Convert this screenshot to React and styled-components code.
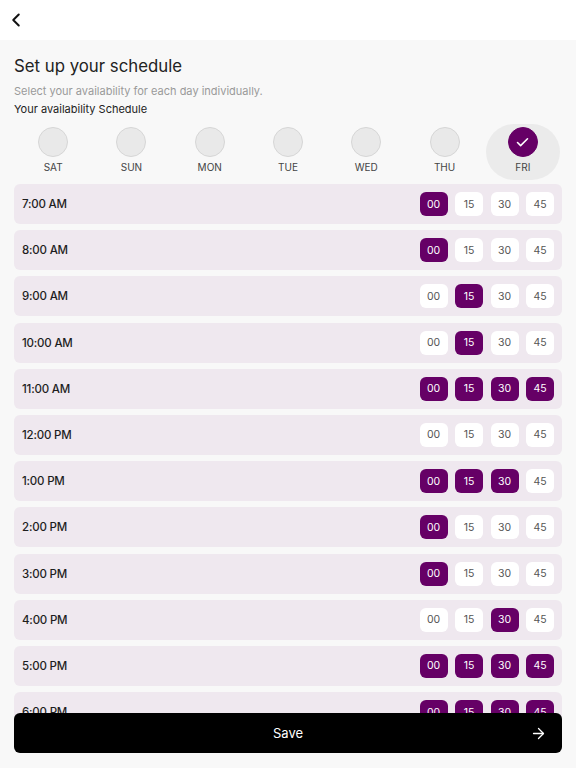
import React from 'react';
import styled, { createGlobalStyle } from 'styled-components';
import { ChevronLeft, Check, ArrowRight } from 'lucide-react';

const GlobalStyle = createGlobalStyle`
  html, body {
    margin: 0;
    padding: 0;
    height: 100%;
    overflow: hidden;
    background: #f8f8f8;
    font-family: Inter, "Noto Sans", sans-serif;
  }
`;

const Page = styled.div`
  min-height: 100vh;
  background: #f8f8f8;
`;

const Header = styled.header`
  height: 40px;
  background: #fff;
  display: flex;
  align-items: center;
  padding: 0 5px;
  color: #111;
`;

const Content = styled.main`
  padding: 14px 14px 0;
`;

const Title = styled.h1`
  margin: 0;
  font-size: 16.8px;
  line-height: 24px;
  font-weight: 400;
  color: #222;
`;

const Subtitle = styled.p`
  margin: 5px 0 0;
  font-size: 11px;
  line-height: 16px;
  color: #9a9a9a;
`;

const Label = styled.p`
  margin: 2px 0 0;
  font-size: 11px;
  line-height: 16px;
  color: #222;
`;

const Days = styled.div`
  display: grid;
  grid-template-columns: repeat(7, 1fr);
  margin-top: 7px;
  margin-bottom: 4px;
`;

const Day = styled.div`
  display: flex;
  flex-direction: column;
  align-items: center;
  padding: 3px 0 7px;
  margin: 0 2px;
  border-radius: 28px;
  background: ${p => (p.$active ? '#ebebeb' : 'transparent')};
`;

const Circle = styled.div`
  width: 30px;
  height: 30px;
  box-sizing: border-box;
  border-radius: 50%;
  display: flex;
  align-items: center;
  justify-content: center;
  color: #fff;
  background: ${p => (p.$active ? '#660066' : '#e9e9e9')};
  border: 1px solid ${p => (p.$active ? '#660066' : '#d6d6d6')};
`;

const DayName = styled.span`
  margin-top: 4px;
  font-size: 10px;
  line-height: 12px;
  color: #444;
`;

const Row = styled.div`
  height: 40px;
  margin-bottom: 6.2px;
  border-radius: 6px;
  background: #efe8ef;
  display: flex;
  align-items: center;
  justify-content: space-between;
  padding: 0 8px;
`;

const Time = styled.span`
  font-size: 11.5px;
  font-weight: 500;
  color: #1e1e1e;
  letter-spacing: -0.2px;
`;

const Chips = styled.div`
  display: flex;
  gap: 7.5px;
`;

const Chip = styled.div`
  width: 28px;
  height: 24px;
  border-radius: 6px;
  display: flex;
  align-items: center;
  justify-content: center;
  font-size: 10.5px;
  background: ${p => (p.$on ? '#660066' : '#fff')};
  color: ${p => (p.$on ? '#fff' : '#555')};
`;

const SaveButton = styled.button`
  position: fixed;
  left: 14px;
  right: 14px;
  bottom: 15px;
  height: 40px;
  border: none;
  border-radius: 6px;
  background: #000;
  color: #fff;
  font-family: inherit;
  font-size: 13px;
  display: flex;
  align-items: center;
  justify-content: center;
`;

const ArrowWrap = styled.span`
  position: absolute;
  right: 15px;
  top: 12px;
  display: flex;
`;

const days = ['SAT', 'SUN', 'MON', 'TUE', 'WED', 'THU', 'FRI'];
const mins = ['00', '15', '30', '45'];

const slots = [
  ['7:00 AM', [0]],
  ['8:00 AM', [0]],
  ['9:00 AM', [1]],
  ['10:00 AM', [1]],
  ['11:00 AM', [0, 1, 2, 3]],
  ['12:00 PM', []],
  ['1:00 PM', [0, 1, 2]],
  ['2:00 PM', [0]],
  ['3:00 PM', [0]],
  ['4:00 PM', [2]],
  ['5:00 PM', [0, 1, 2, 3]],
  ['6:00 PM', [0, 1, 2, 3]],
];

export default function App() {
  return (
    <Page>
      <GlobalStyle />
      <Header>
        <ChevronLeft size={22} strokeWidth={2.2} />
      </Header>
      <Content>
        <Title>Set up your schedule</Title>
        <Subtitle>Select your availability for each day individually.</Subtitle>
        <Label>Your availability Schedule</Label>
        <Days>
          {days.map(d => {
            const active = d === 'FRI';
            return (
              <Day key={d} $active={active}>
                <Circle $active={active}>
                  {active && <Check size={15} strokeWidth={2.5} />}
                </Circle>
                <DayName>{d}</DayName>
              </Day>
            );
          })}
        </Days>
        {slots.map(([time, on]) => (
          <Row key={time}>
            <Time>{time}</Time>
            <Chips>
              {mins.map((m, i) => (
                <Chip key={m} $on={on.includes(i)}>{m}</Chip>
              ))}
            </Chips>
          </Row>
        ))}
      </Content>
      <SaveButton>
        Save
        <ArrowWrap>
          <ArrowRight size={17} strokeWidth={1.8} />
        </ArrowWrap>
      </SaveButton>
    </Page>
  );
}
